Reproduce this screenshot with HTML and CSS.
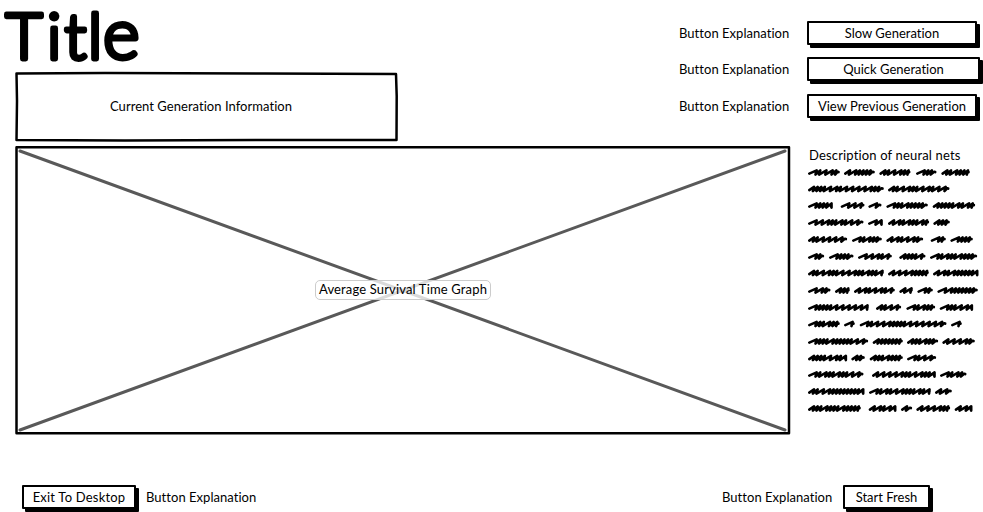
FILE: index.html
```html
<!DOCTYPE html>
<html lang="en">
<head>
<meta charset="utf-8">
<title>Title</title>
<link rel="stylesheet" href="styles.css">
</head>
<body>
<div class="app">
  <div class="upper">
    <main class="main">
      <h1 class="title"><svg width="170" height="72" role="img"><text y="59" x="5.500 47 64.500 88 103">Titl<tspan class="wide">e</tspan></text></svg></h1>
      <section class="info">
        <svg class="sketch" viewBox="0 0 384 71"><path d="M1.500 2.500L90 2L250 2.500L381 3L381.700 25L381.500 69L250 69L110 69.500L1.500 69L2 30Z"/></svg>
        <span class="label current">Current Generation Information</span>
      </section>
      <section class="graph">
        <svg class="sketch" viewBox="0 0 776 290"><path class="cross" d="M5 6L770 285M770 6L5 285"/><path d="M1.500 2.200H774V288.300H1.500Z"/></svg>
        <span class="label badge">Average Survival Time Graph</span>
      </section>
    </main>
    <aside class="side">
      <div class="row"><span class="label explain">Button Explanation</span><button class="btn w173"><span class="label slow">Slow Generation</span></button></div>
      <div class="row"><span class="label explain">Button Explanation</span><button class="btn w176"><span class="label quick">Quick Generation</span></button></div>
      <div class="row"><span class="label explain">Button Explanation</span><button class="btn w173"><span class="label view">View Previous Generation</span></button></div>
      <div class="description">
        <h2 class="label desc">Description of neural nets</h2>
        <svg class="scribbles" width="176" height="256"></svg>
      </div>
    </aside>
  </div>
  <footer class="footer">
    <div class="row"><button class="btn w116"><span class="label exit">Exit To Desktop</span></button><span class="label explain">Button Explanation</span></div>
    <div class="row"><span class="label explain">Button Explanation</span><button class="btn w89"><span class="label fresh">Start Fresh</span></button></div>
  </footer>
</div>
<script src="script.js"></script>
</body>
</html>
```
FILE: styles.css
```css
* { box-sizing: border-box; }
body { margin: 0; background: #fff; color: #000; font: 13px/18px Lato, "Open Sans", sans-serif; font-variant-ligatures: none; }
.app { width: 983px; height: 512px; overflow: hidden; }
.upper { display: flex; height: 484px; }
.main { width: 679px; flex: none; }
.title { margin: 0; height: 71px; line-height: 0; }
.title svg { overflow: visible; }
.title text { font: 300 64px Lato, sans-serif; stroke: #000; stroke-width: 4.8px; stroke-linejoin: round; }
.title .wide { font-size: 70px; }
.info, .graph { position: relative; display: flex; align-items: center; justify-content: center; margin-left: 15px; }
.info { width: 384px; height: 71px; padding: 0 12px 2px 0; }
.graph { width: 776px; height: 290px; margin-top: 3px; }
.sketch { position: absolute; inset: 0; width: 100%; height: 100%; fill: none; stroke: #000; stroke-width: 2.5px; stroke-linejoin: round; }
.sketch .cross { stroke: #595959; stroke-width: 3px; stroke-linecap: round; }
.label { position: relative; margin: 0; font-size: 13px; font-weight: 400; line-height: 18px; white-space: nowrap; }
.current { letter-spacing: .04px; }
.badge { width: 176px; height: 20px; text-align: center; line-height: 16px; letter-spacing: .15px; background: rgba(255,255,255,.78); border: 1px solid #ccc; border-radius: 5px; }
.side { width: 304px; flex: none; padding-top: 20px; }
.row { display: flex; align-items: center; gap: 17px; height: 26px; }
.side .row { margin-bottom: 10.400px; }
.explain { width: 111px; letter-spacing: .04px; }
.btn { height: 24px; padding: 0; margin: 0; border: 2.500px solid #000; border-radius: 1px; background: #fff; color: #000; font: inherit; font-variant-ligatures: none; box-shadow: 3px 3px 0 #000; text-align: center; line-height: 18px; }
.w173 { width: 170px; } .w176 { width: 173px; } .w116 { width: 114px; } .w89 { width: 87px; }
.exit { letter-spacing: .2px; }
.desc { letter-spacing: .16px; }
.description { padding: 17px 0 0 130px; }
.scribbles { display: block; margin-left: -3px; fill: none; stroke: #000; stroke-width: 2.6px; stroke-linecap: round; stroke-linejoin: round; }
.footer { display: flex; justify-content: space-between; padding: 0 53px 0 22px; }
.footer .row:first-child { gap: 10px; }
.footer .row:last-child { gap: 10px; }
```
FILE: script.js
```js
const rows = [
  [173, [83,178,191,283,297,390,407,468,483,568]],
  [189.5, [83,310,323,507]],
  [206, [83,157,181,252,264,303,318,442,457,584]],
  [223, [83,249,263,307,323,446,459,508]],
  [240, [83,200,215,304,318,428,451,496,510,577]],
  [257, [83,131,146,219,233,334,357,435,449,590]],
  [273.5, [83,310,323,445,458,594]],
  [291, [83,150,164,208,221,343,357,397,411,457,471,592]],
  [308, [83,265,287,362,378,464,478,578]],
  [324.5, [83,178,191,223,238,498,512,544]],
  [342, [83,263,277,367,380,473,486,583]],
  [358.5, [83,200,213,253,268,367,380,467]],
  [375, [83,249,275,466,479,558]],
  [392, [83,252,266,451,464,514]],
  [409, [83,241,265,348,362,395,408,509,523,576]]
];
const svg = document.querySelector('.scribbles');
let seed = 7;
function random() { seed = (seed * 16807) % 2147483647; return seed / 2147483647; }
for (const [y, words] of rows) {
  for (let i = 0; i < words.length; i += 2) {
    let x = words[i] / 3 - 26 + 1.6;
    const end = words[i + 1] / 3 - 26 - .8;
    const mid = y - 164.4;
    let d = `M${x} ${mid + 1}`;
    while (x < end - 5) {
      const step = random() < .45 ? 7.4 : 4.8;
      d += `L${Math.min(end, x + step)} ${mid - 2.2}L${Math.min(end, x + step - 1.2)} ${mid + 2}`;
      x += step - 1.2;
    }
    d += `L${end - 1} ${mid - .8}L${end} ${mid - .5}`;
    const path = document.createElementNS('http://www.w3.org/2000/svg', 'path');
    path.setAttribute('d', d);
    svg.appendChild(path);
  }
}
```
